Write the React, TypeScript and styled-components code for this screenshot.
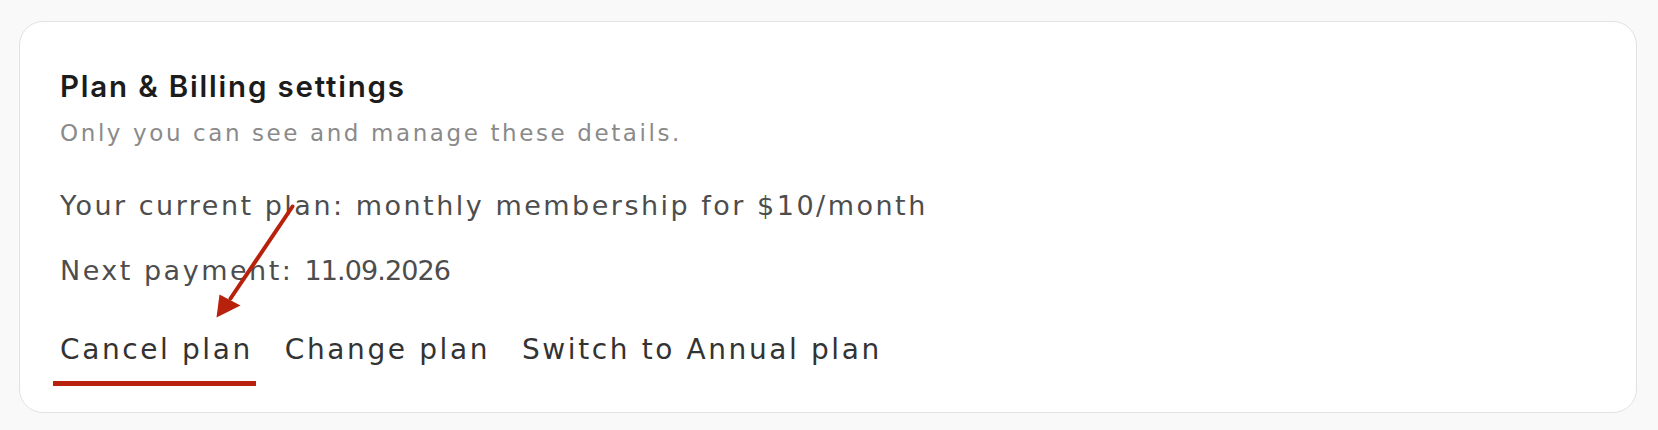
import styled, { createGlobalStyle } from "styled-components";

const GlobalStyle = createGlobalStyle`
  html, body {
    margin: 0;
    padding: 0;
    background: #f9f9f9;
  }
  body {
    font-family: "DejaVu Sans", Inter, sans-serif;
  }
`;

const Page = styled.div`
  padding: 21px 21px 17px 19px;
`;

const Card = styled.section`
  position: relative;
  box-sizing: border-box;
  height: 392px;
  background: #fff;
  border: 1.5px solid #e2e2e2;
  border-radius: 24px;
  padding: 46px 40px 0 40px;
`;

const Title = styled.h2`
  margin: 0;
  font-family: Inter, "DejaVu Sans", sans-serif;
  font-size: 29.5px;
  line-height: 36px;
  font-weight: 600;
  letter-spacing: 1.8px;
  color: #1c1c1c;
`;

const Subtitle = styled.p`
  margin: 13px 0 0;
  font-size: 23px;
  line-height: 32px;
  letter-spacing: 2.6px;
  color: #8a8a8a;
`;

const Info = styled.p<{ $gap: number }>`
  margin: ${({ $gap }) => $gap}px 0 0;
  font-size: 27px;
  line-height: 36px;
  letter-spacing: 2.5px;
  color: #4d4d4d;
`;

const DateValue = styled.time`
  letter-spacing: -0.9px;
`;

const Actions = styled.nav`
  display: flex;
  gap: 32px;
  margin-top: 43px;
`;

const Action = styled.a<{ $active?: boolean }>`
  position: relative;
  font-size: 28px;
  line-height: 36px;
  letter-spacing: 2.6px;
  color: #333;
  text-decoration: none;
  cursor: pointer;
  padding-bottom: 11px;

  &::after {
    content: "";
    position: absolute;
    left: -7px;
    right: -3px;
    bottom: -7px;
    height: 5px;
    background: ${({ $active }) => ($active ? "#b8210c" : "transparent")};
  }
`;

const Annotation = styled.svg`
  position: absolute;
  left: 0;
  top: 0;
  width: 100%;
  height: 100%;
  pointer-events: none;
  overflow: visible;
`;

export default function App() {
  return (
    <>
      <GlobalStyle />
      <Page>
        <Card>
          <Title>Plan &amp; Billing settings</Title>
          <Subtitle>Only you can see and manage these details.</Subtitle>
          <Info $gap={39}>
            Your current plan: monthly membership for $10/month
          </Info>
          <Info $gap={29}>
            Next payment: <DateValue dateTime="2026-09-11">11.09.2026</DateValue>
          </Info>
          <Actions>
            <Action $active>Cancel plan</Action>
            <Action>Change plan</Action>
            <Action>Switch to Annual plan</Action>
          </Actions>
          <Annotation>
            <g transform="translate(-20.5 -22.5)" fill="#b8210c">
              <line
                x1="293"
                y1="207"
                x2="231"
                y2="299"
                stroke="#b8210c"
                strokeWidth="4"
                strokeLinecap="round"
              />
              <polygon points="217,318 220,295 241,306" />
            </g>
          </Annotation>
        </Card>
      </Page>
    </>
  );
}
